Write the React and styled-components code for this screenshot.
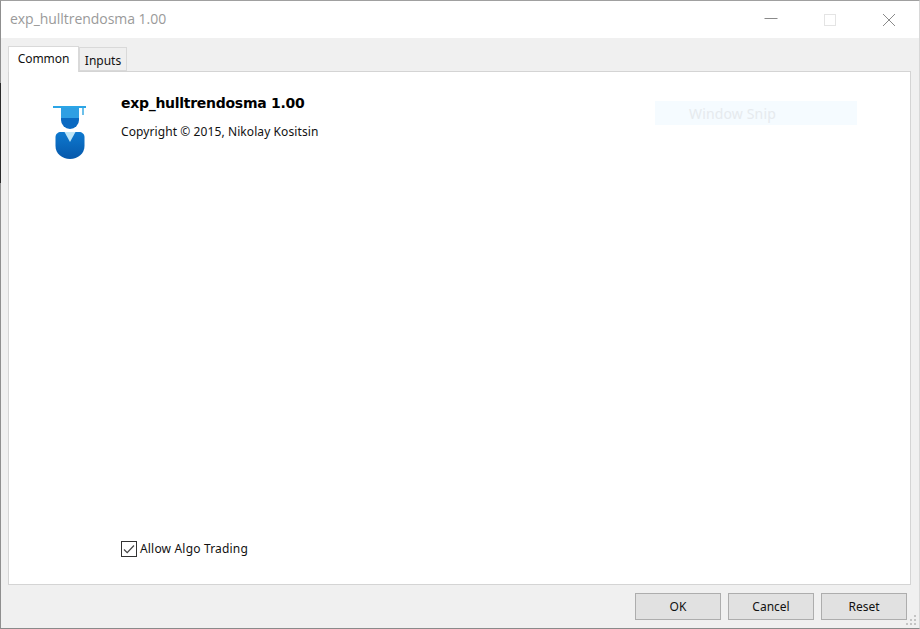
import styled, { createGlobalStyle } from "styled-components";

const GlobalStyle = createGlobalStyle`
  html, body {
    margin: 0;
    padding: 0;
    background: #fff;
  }
  body {
    font-family: "Noto Sans", "Liberation Sans", sans-serif;
  }
`;

const Window = styled.div`
  box-sizing: border-box;
  position: relative;
  width: 920px;
  height: 629px;
  display: flex;
  flex-direction: column;
  background: #f0f0f0;
  border-top: 1px solid #a0a0a0;
  border-left: 1px solid #8f8f8f;
  border-bottom: 1px solid #8a8a8a;
  border-right: 1px solid #d8d8d8;
`;

const TitleBar = styled.div`
  height: 37px;
  flex: none;
  display: flex;
  align-items: center;
  justify-content: space-between;
  background: #fff;
  padding-left: 9px;
`;

const Title = styled.div`
  font-family: "Open Sans", "Noto Sans", sans-serif;
  font-size: 14px;
  color: #9a9a9a;
  letter-spacing: -0.04px;
  margin-bottom: 2px;
`;

const WindowControls = styled.div`
  display: flex;
  align-items: center;
  gap: 45px;
  padding-right: 23px;
`;

const ControlIcon = styled.svg`
  display: block;
  width: 14px;
  height: 14px;
  fill: none;
`;

const Body = styled.div`
  flex: 1;
  display: flex;
  flex-direction: column;
  padding: 8px 8px 0 7px;
  min-height: 0;
`;

const TabRow = styled.div`
  display: flex;
  align-items: flex-end;
  height: 26px;
  flex: none;
  position: relative;
  z-index: 1;
  margin-bottom: -1px;
`;

const Tab = styled.div`
  box-sizing: border-box;
  display: flex;
  justify-content: center;
  font-size: 12px;
  color: #111;
  border: 1px solid #d9d9d9;
  ${(p) =>
    p.$active
      ? `
    width: 71px;
    height: 26px;
    padding-top: 3px;
    background: #fff;
    border-bottom: none;
    letter-spacing: -0.05px;
  `
      : `
    width: 48px;
    height: 24px;
    padding-top: 4px;
    margin-bottom: 1px;
    background: #efefef;
  `}
`;

const Panel = styled.div`
  box-sizing: border-box;
  position: relative;
  height: 514px;
  flex: none;
  display: flex;
  flex-direction: column;
  background: #fff;
  border: 1px solid #d4d4d4;
  padding: 21px 0 27px 44px;
`;

const Header = styled.div`
  display: flex;
  gap: 22px;
`;

const Logo = styled.svg`
  display: block;
  width: 46px;
  height: 54px;
  flex: none;
  margin-top: 13px;
`;

const Info = styled.div`
  display: flex;
  flex-direction: column;
  gap: 10px;
`;

const ExpertName = styled.div`
  font-family: "DejaVu Sans", sans-serif;
  font-weight: 700;
  font-size: 14px;
  line-height: 20px;
  letter-spacing: -0.28px;
  color: #000;
`;

const Copyright = styled.div`
  font-size: 12px;
  line-height: 18px;
  letter-spacing: 0.09px;
  color: #111;
`;

const CheckRow = styled.div`
  margin-top: auto;
  margin-left: 68px;
  display: flex;
  align-items: center;
  gap: 3px;
  font-size: 12px;
  letter-spacing: 0.18px;
  color: #111;
`;

const CheckBox = styled.div`
  box-sizing: border-box;
  width: 16px;
  height: 16px;
  display: flex;
  align-items: center;
  justify-content: center;
  border: 1px solid #333;
  background: #fff;
`;

const SnipBadge = styled.div`
  position: absolute;
  left: 646px;
  top: 29px;
  width: 202px;
  height: 24px;
  box-sizing: border-box;
  padding-left: 34px;
  background: #f5fbff;
  font-size: 14px;
  line-height: 26px;
  letter-spacing: 0.15px;
  color: #e6eaee;
`;

const Footer = styled.div`
  flex: 1;
  display: flex;
  justify-content: flex-end;
  align-items: flex-start;
  gap: 7px;
  padding: 8px 4px 0 0;
`;

const DialogButton = styled.button`
  box-sizing: border-box;
  width: ${(p) => p.$width}px;
  height: 27px;
  padding: 0;
  font-family: inherit;
  font-size: 12px;
  color: #111;
  background: #e1e1e1;
  border: 1px solid #adadad;
`;

const GripDots = styled.svg`
  position: absolute;
  right: 1px;
  bottom: 1px;
  width: 12px;
  height: 12px;
`;

const EdgeMark = styled.div`
  position: absolute;
  left: -1px;
  top: 82px;
  width: 1px;
  height: 100px;
  background: #2a2a2a;
`;

function GraduateLogo() {
  return (
    <Logo viewBox="0 0 46 54">
      <defs>
        <linearGradient id="bodyFill" x1="0" y1="0" x2="0" y2="1">
          <stop offset="0" stopColor="#0e79cf" />
          <stop offset="1" stopColor="#0658ab" />
        </linearGradient>
      </defs>
      {/* cap board and tassel */}
      <rect x="0" y="0" width="33" height="2" fill="#2ba5e6" />
      <rect x="29" y="2" width="2" height="7" fill="#6cc0ea" />
      {/* head, light under the cap then dark */}
      <path d="M8 2h18v10H8z" fill="#2f9fe3" />
      <path d="M8 12h18v2a9 9 0 0 1-18 0z" fill="#0a69c1" />
      {/* shoulders */}
      <path
        d="M2.500 31c0-3 2.500-5 5.500-5h18c3 0 5.500 2 5.500 5v9c0 7.500-6.500 13-14.500 13S2.500 47.500 2.500 40z"
        fill="url(#bodyFill)"
      />
      <path d="M11.500 26h11L17 36z" fill="#bfe6f7" />
    </Logo>
  );
}

export default function App() {
  return (
    <>
      <GlobalStyle />
      <Window>
        <EdgeMark />
        <TitleBar>
          <Title>exp_hulltrendosma 1.00</Title>
          <WindowControls>
            <ControlIcon viewBox="0 0 14 14">
              <path d="M0.500 5.500h13" stroke="#8a8a8a" />
            </ControlIcon>
            <ControlIcon viewBox="0 0 14 14">
              <rect x="1.500" y="1.500" width="11" height="11" stroke="#e4e4e4" />
            </ControlIcon>
            <ControlIcon viewBox="0 0 14 14">
              <path d="M1 1l12 12M13 1L1 13" stroke="#8a8a8a" />
            </ControlIcon>
          </WindowControls>
        </TitleBar>
        <Body>
          <TabRow>
            <Tab $active>Common</Tab>
            <Tab>Inputs</Tab>
          </TabRow>
          <Panel>
            <Header>
              <GraduateLogo />
              <Info>
                <ExpertName>exp_hulltrendosma 1.00</ExpertName>
                <Copyright>Copyright © 2015, Nikolay Kositsin</Copyright>
              </Info>
            </Header>
            <SnipBadge>Window Snip</SnipBadge>
            <CheckRow>
              <CheckBox>
                <svg width="14" height="14" viewBox="0 0 14 14" fill="none">
                  <path d="M2 7.500l3.200 3.200L12 3.500" stroke="#444" strokeWidth="1.200" />
                </svg>
              </CheckBox>
              Allow Algo Trading
            </CheckRow>
          </Panel>
          <Footer>
            <DialogButton $width={86}>OK</DialogButton>
            <DialogButton $width={86}>Cancel</DialogButton>
            <DialogButton $width={86}>Reset</DialogButton>
          </Footer>
        </Body>
        <GripDots viewBox="0 0 12 12">
          <path
            d="M8 0h2v2H8zM4 4h2v2H4zM8 4h2v2H8zM0 8h2v2H0zM4 8h2v2H4zM8 8h2v2H8z"
            fill="#c4c4c4"
          />
        </GripDots>
      </Window>
    </>
  );
}
